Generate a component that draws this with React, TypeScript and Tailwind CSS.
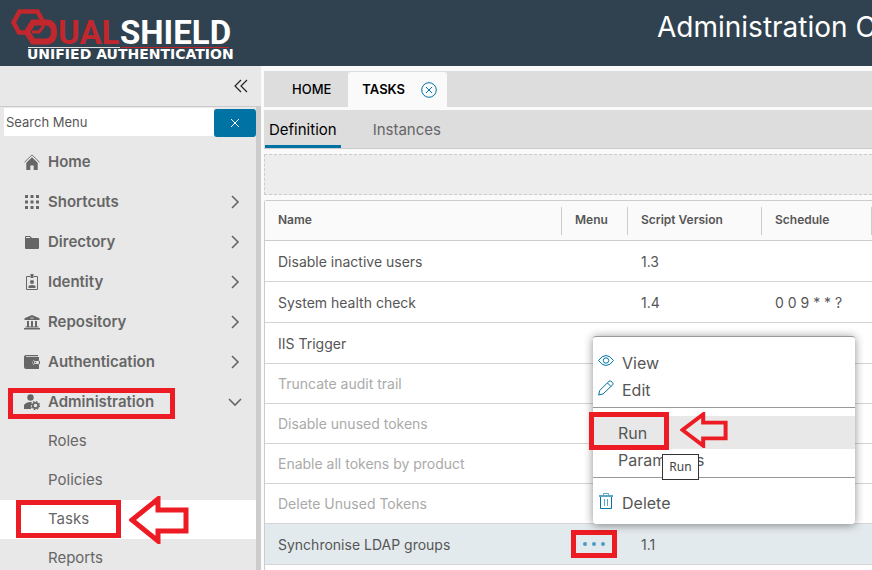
import React from "react";
import { clsx } from "clsx";

type NavItem = { label: string; icon: React.ReactNode; state?: "closed" | "open" };
type Task = {
  name: string;
  version?: string;
  schedule?: string;
  disabled?: boolean;
  selected?: boolean;
};

const HomeIcon = () => (
  <svg viewBox="0 0 16 16" className="size-4" fill="#666">
    <path d="M.5 8.200 8 .9l7.500 7.300" fill="none" stroke="#777" strokeWidth="1" />
    <path d="M8 3.200 2.300 8.700V16h4v-4.500h3.400V16h4V8.700z" />
  </svg>
);

const GridIcon = () => (
  <svg viewBox="0 0 16 16" className="size-4" fill="#666">
    {[1, 6.5, 12].map((y) =>
      [1, 6.5, 12].map((x) => <rect key={`${x}-${y}`} x={x} y={y} width="3" height="3" />)
    )}
  </svg>
);

const FolderIcon = () => (
  <svg viewBox="0 0 16 16" className="size-4" fill="#666">
    <path d="M1 3q0-1 1-1h4l2 2h6q1 0 1 1v9q0 1-1 1H2q-1 0-1-1z" />
    <path d="M2 4V3h3.500l1 1z" fill="#e8e8e8" />
  </svg>
);

const BadgeIcon = () => (
  <svg viewBox="0 0 16 16" className="size-4" fill="#666">
    <path d="M6 2.500H2.500v13h11v-13H10" fill="none" stroke="#666" />
    <rect x="6.500" y="0" width="3" height="4" />
    <circle cx="8" cy="8" r="2" />
    <path d="M4.500 14v-1.500q0-1.500 3.500-1.500t3.500 1.500V14z" />
  </svg>
);

const BankIcon = () => (
  <svg viewBox="0 0 16 16" className="size-4" fill="#666">
    <path d="M8 1 .500 4.300V6h15V4.300zM6 4.500q2-2.200 4 0z" fillRule="evenodd" />
    <path d="M3 7h2v6H3zM7 7h2v6H7zM11 7h2v6h-2zM1.500 12.500h13v1h-13zM0 14h16v1.500H0z" />
  </svg>
);

const WalletIcon = () => (
  <svg viewBox="0 0 16 16" className="size-4" fill="#666">
    <path d="M0 3q0-2 2-2h12v1.200H2V3h13v3h-4.500q-2 0-2 2.500t2 2.500H15v4H2q-2 0-2-2z" />
    <rect x="9.500" y="6.500" width="6" height="4" rx="1.500" fill="#e8e8e8" stroke="#666" />
    <circle cx="11.500" cy="8.500" r=".8" />
  </svg>
);

const AdminIcon = () => (
  <svg viewBox="0 0 16 16" className="size-4" fill="#666">
    <circle cx="6.500" cy="3.500" r="3.200" />
    <path d="M0 15v-4q2-3 6.500-3l1.500.2Q6 11 7 15z" />
    <circle cx="11.500" cy="11.500" r="2.700" fill="none" stroke="#666" strokeWidth="1.800" />
    <circle cx="11.500" cy="11.500" r="4" fill="none" stroke="#666" strokeWidth="1.200" strokeDasharray="1.570 1.570" />
  </svg>
);

const NAV: NavItem[] = [
  { label: "Home", icon: <HomeIcon /> },
  { label: "Shortcuts", icon: <GridIcon />, state: "closed" },
  { label: "Directory", icon: <FolderIcon />, state: "closed" },
  { label: "Identity", icon: <BadgeIcon />, state: "closed" },
  { label: "Repository", icon: <BankIcon />, state: "closed" },
  { label: "Authentication", icon: <WalletIcon />, state: "closed" },
  { label: "Administration", icon: <AdminIcon />, state: "open" },
];

const SUB_NAV = ["Roles", "Policies", "Tasks", "Reports"];

const TASKS: Task[] = [
  { name: "Disable inactive users", version: "1.3" },
  { name: "System health check", version: "1.4", schedule: "0 0 9 * * ?" },
  { name: "IIS Trigger" },
  { name: "Truncate audit trail", disabled: true },
  { name: "Disable unused tokens", disabled: true },
  { name: "Enable all tokens by product", disabled: true },
  { name: "Delete Unused Tokens", disabled: true },
  { name: "Synchronise LDAP groups", version: "1.1", selected: true },
];

const Logo = () => (
  <svg width="226" height="58" viewBox="8 4 226 58" role="img" aria-label="DualShield Unified Authentication">
    <g fill="none" stroke="#c1272d">
      <path d="M26 32.500h-7L13.500 22.500 19.500 11.500h18l5 9" strokeWidth="4.500" />
      <path d="M33 22.500h13q8 0 8 9.500t-8 9.500H33l-6-9.500z" strokeWidth="6" />
      <path d="M43 24v3l-4 5h-7" strokeWidth="3" />
    </g>
    <g fontFamily="Roboto, sans-serif" fontWeight="700" fontSize="33">
      <text x="58" y="44" fill="#c1272d">UAL</text>
      <text x="120" y="44" fill="#fff">SHIELD</text>
    </g>
    <path d="M28 47.500h92" stroke="#ddd" />
    <path d="M121 47.500h108" stroke="#c1272d" />
    <text x="27" y="59" fill="#fff" fontFamily="'DejaVu Sans', sans-serif" fontWeight="700" fontSize="14">
      UNIFIED AUTHENTICATION
    </text>
  </svg>
);

const Chevron = ({ open }: { open: boolean }) => (
  <svg viewBox="0 0 14 14" className="size-3.5" fill="none" stroke="#666" strokeWidth="1.600">
    <path d={open ? "M1 4l6 6 6-6" : "M4 1l6 6-6 6"} />
  </svg>
);

const Arrow = ({ className }: { className: string }) => (
  <svg viewBox="0 0 60 48" preserveAspectRatio="none" className={className}>
    <path d="M3 24 29 3v11h28v21H29v10z" fill="none" stroke="#ed1c24" strokeWidth="5" />
  </svg>
);

const Sidebar = () => (
  <aside className="flex w-[261px] shrink-0 flex-col bg-[#e8e8e8]">
    <div className="flex h-[41px] shrink-0 items-center justify-end border-b border-[#ccc] pr-3">
      <button aria-label="Collapse menu">
        <svg viewBox="0 0 16 16" className="size-4" fill="none" stroke="#222" strokeWidth="1.200">
          <path d="M8 2 2 8l6 6M14 2 8 8l6 6" />
        </svg>
      </button>
    </div>
    <div className="flex min-h-0 grow">
      <div className="min-w-0 grow">
        <div className="mb-[3px] flex h-8 items-start pt-px pl-1">
          <input
            aria-label="Search Menu"
            placeholder="Search Menu"
            className="h-7 min-w-0 grow bg-white pl-0.5 text-[13px] text-[#565656] placeholder:text-[#565656]"
          />
          <button
            aria-label="Clear search"
            className="mt-px flex h-7 w-[42px] items-center justify-center rounded-[3px] bg-[#0072a3]"
          >
            <svg viewBox="0 0 10 10" className="size-2.5" stroke="#fff">
              <path d="M1 1l8 8M9 1 1 9" />
            </svg>
          </button>
        </div>
        <nav>
          {NAV.map((item) => (
            <button
              key={item.label}
              className="relative flex h-10 w-full items-center pr-3.5 pl-6 text-[15px] font-semibold text-[#666]"
            >
              {item.icon}
              <span className="ml-2 grow text-left">{item.label}</span>
              {item.state && <Chevron open={item.state === "open"} />}
              {item.state === "open" && (
                <span className="absolute top-1.5 left-2 h-[31px] w-[167px] border-5 border-[#ed1c24]" />
              )}
            </button>
          ))}
          {SUB_NAV.map((label) => (
            <a
              key={label}
              href="#"
              className={clsx(
                "relative flex h-[39px] items-center pl-12 text-[15px] text-[#666]",
                label === "Tasks" && "bg-white"
              )}
            >
              {label}
              {label === "Tasks" && (
                <>
                  <span className="absolute top-0 left-4 h-[38px] w-[105px] border-5 border-[#ed1c24]" />
                  <Arrow className="absolute -top-1 left-[129px] h-12 w-[60px]" />
                </>
              )}
            </a>
          ))}
        </nav>
      </div>
      <div className="w-[5px] shrink-0 bg-[#ccc]" />
    </div>
  </aside>
);

const ContextMenu = () => (
  <div className="absolute top-[336px] left-[593px] w-[262px] rounded-[3px] border-t border-[#999] bg-white text-[16px] text-[#565656] shadow-[0_1px_10px_rgba(0,0,0,0.45)]">
    <div className="pt-3 pb-1">
      <button className="flex h-[27px] w-full items-center gap-2 pl-[5px]">
        <svg viewBox="0 0 16 16" className="mb-1 size-4" fill="none" stroke="#0072a3">
          <path d="M.500 7.500Q4 2.500 8 2.500t7.500 5q-3.500 5-7.500 5t-7.500-5z" />
          <circle cx="8" cy="7.500" r="2.700" />
        </svg>
        View
      </button>
      <button className="flex h-[27px] w-full items-center gap-2 pl-[5px]">
        <svg viewBox="0 0 16 16" className="mb-1 size-4" fill="none" stroke="#0072a3">
          <path d="M.700 15l1-4.500L11 1.300q1-1 2 0l1.700 1.500q1 1 0 2L5 14zM9.500 3l3.500 3.500" />
        </svg>
        Edit
      </button>
    </div>
    <div className="border-t border-[#999] pt-2 pb-[7px]">
      <button className="relative flex h-[33px] w-full items-center bg-[#e8e8e8] pl-[25px]">
        Run
        <span className="absolute -top-1 -left-1 h-[38px] w-20 border-5 border-[#ed1c24]" />
        <Arrow className="absolute -top-1 left-[87px] h-9 w-12" />
      </button>
      <button className="flex h-[21px] w-full items-center pl-[25px]">Parameters</button>
    </div>
    <div className="border-t border-[#999] pt-[11px] pb-[7px]">
      <button className="flex h-7 w-full items-center gap-2 pl-[5px]">
        <svg viewBox="0 0 16 16" className="mb-1 size-4" fill="none" stroke="#0072a3">
          <path d="M2.500 4v11.500h11V4" />
          <path d="M6.500 6v7M9.500 6v7M5.500 2.500v-2h5v2" stroke="#5ba5c5" />
          <path d="M1 3h14" stroke="#5ba5c5" strokeWidth="2" />
        </svg>
        Delete
      </button>
    </div>
    <div
      role="tooltip"
      className="absolute top-[117px] left-[69px] flex h-[26px] w-[37px] items-center justify-center border border-[#333] bg-white font-['Noto_Sans',sans-serif] text-[12px] text-[#444]"
    >
      Run
    </div>
  </div>
);

const TaskTable = () => (
  <div className="mt-[5px] grow rounded-tl-[3px] border-t border-l border-[#ccc] bg-white">
    <table className="w-full table-fixed border-separate border-spacing-0 text-left text-[#565656]">
      <colgroup>
        <col className="w-[297px]" />
        <col className="w-[66px]" />
        <col className="w-[134px]" />
        <col />
      </colgroup>
      <thead>
        <tr className="h-10 bg-[#fafafa] text-[12px]">
          {["Name", "Menu", "Script Version", "Schedule"].map((title) => (
            <th key={title} className="border-b border-[#ccc] p-0 font-semibold">
              <div className="flex h-7 items-center border-r border-[#ccc] pb-0.5 pl-[13px]">{title}</div>
            </th>
          ))}
        </tr>
      </thead>
      <tbody className="text-[14px]">
        {TASKS.map((task) => (
          <tr
            key={task.name}
            className={clsx(
              task.disabled ? "h-10 text-[#aaa]" : "h-[41px]",
              task.selected && "bg-[#e3eaed]"
            )}
          >
            <td className="border-b border-[#d4d4d4] p-0 pl-[13px]">{task.name}</td>
            <td className="border-b border-[#d4d4d4] p-0 pl-[9px]">
              {task.selected && (
                <button
                  aria-label="Task menu"
                  className="flex h-7 w-[46px] items-center justify-center gap-[5px] border-5 border-[#ed1c24]"
                >
                  <span className="size-1 rounded-full bg-[#4a9cc4]" />
                  <span className="size-1 rounded-full bg-[#4a9cc4]" />
                  <span className="size-1 rounded-full bg-[#4a9cc4]" />
                </button>
              )}
            </td>
            <td className="border-b border-[#d4d4d4] p-0 pl-[13px]">{task.version}</td>
            <td className="border-b border-[#d4d4d4] p-0 pl-[13px]">{task.schedule}</td>
          </tr>
        ))}
      </tbody>
    </table>
  </div>
);

const App: React.FC = () => {
  return (
    <div className="relative flex h-screen flex-col overflow-hidden bg-[#fafafa] font-[Inter,sans-serif]">
      <header className="flex h-[66px] shrink-0 overflow-hidden bg-[#304250] pt-1 pl-2">
        <Logo />
        <h1 className="ml-auto w-[215px] pt-0.5 text-[28px] whitespace-nowrap text-white">
          Administration Console
        </h1>
      </header>
      <div className="flex min-h-0 grow">
        <Sidebar />
        <main className="flex min-w-0 grow flex-col pt-[5px] pl-[3px]">
          <div className="flex h-9 shrink-0 items-end bg-[#ddd] text-[13px] font-medium text-black">
            <button className="h-[35px] pr-[17px] pl-7">HOME</button>
            <div className="flex h-[35px] w-[99px] items-center justify-between rounded-t-[3px] bg-[#fafafa] pr-2.5 pl-3.5">
              <button className="font-semibold">TASKS</button>
              <button aria-label="Close tab">
                <svg viewBox="0 0 16 16" className="size-4" fill="none" stroke="#0072a3">
                  <circle cx="8" cy="8" r="7.300" />
                  <path d="M5 5l6 6M11 5l-6 6" />
                </svg>
              </button>
            </div>
          </div>
          <div className="mt-[3px] flex h-[39px] shrink-0 gap-7 border-b border-[#ccc] bg-[#ddd] pl-px text-[15px]">
            <button className="border-b-3 border-[#0072a3] px-1 pt-1.5 text-black">Definition</button>
            <button className="px-1 pt-0.5 text-[#666]">Instances</button>
          </div>
          <div className="mt-[5px] h-[41px] shrink-0 border border-r-0 border-dashed border-[#ccc] bg-[#ededed]" />
          <TaskTable />
        </main>
      </div>
      <ContextMenu />
    </div>
  );
};

export default App;
